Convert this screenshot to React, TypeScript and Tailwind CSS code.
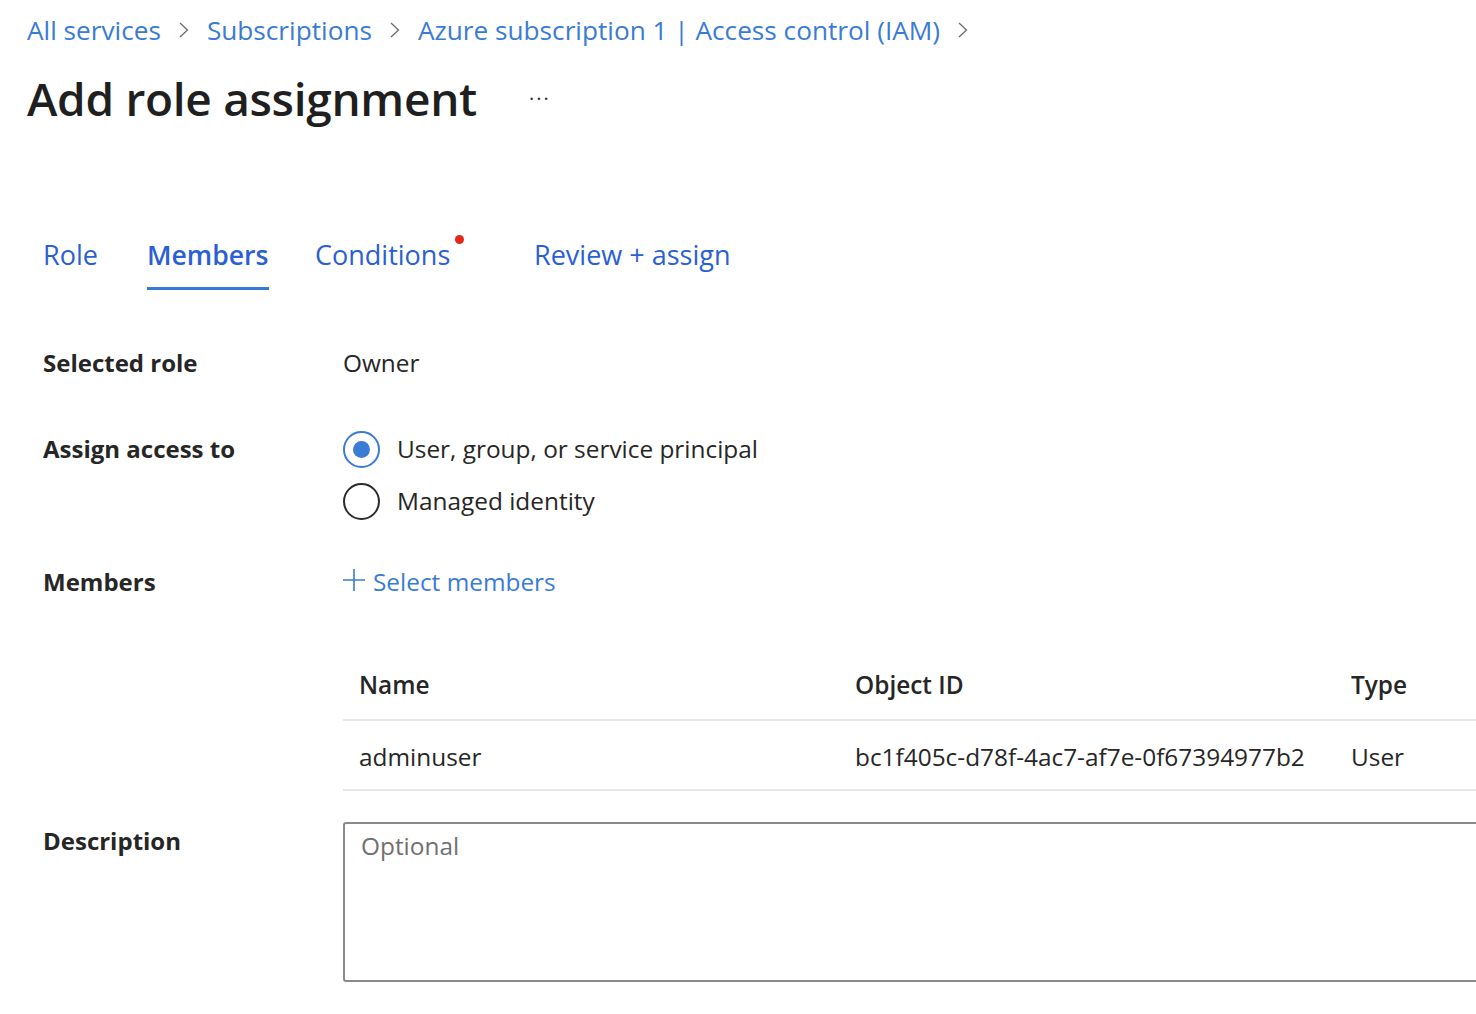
const crumbs = ["All services", "Subscriptions", "Azure subscription 1 | Access control (IAM)"];

const tabs = [
  { name: "Role", active: false, dot: false, w: "w-[104px]" },
  { name: "Members", active: true, dot: false, w: "w-[168px]" },
  { name: "Conditions", active: false, dot: true, w: "w-[219px]" },
  { name: "Review + assign", active: false, dot: false, w: "" },
];

function Chevron() {
  return (
    <svg width="14" height="22" viewBox="0 0 14 22" className="mx-[16px] shrink-0">
      <path d="M3 4l7.5 7L3 18" fill="none" stroke="#6b6b6b" strokeWidth="1.3" />
    </svg>
  );
}

function Radio({ checked, label }: { checked: boolean; label: string }) {
  return (
    <div className="flex h-[52px] items-center">
      <span
        className={
          checked
            ? "flex h-[37px] w-[37px] items-center justify-center rounded-full border-[2px] border-[#3a7bd5]"
            : "flex h-[37px] w-[37px] items-center justify-center rounded-full border-[2px] border-[#2b2b2b]"
        }
      >
        {checked && <span className="h-[17px] w-[17px] rounded-full bg-[#3a7bd5]" />}
      </span>
      <span className="ml-[17px] text-[24.4px] leading-[32px] text-[#262626]">{label}</span>
    </div>
  );
}

export default function App() {
  return (
    <div className="min-h-screen w-full overflow-hidden bg-white font-['Open_Sans',sans-serif] text-[#262626]">
      <div className="pl-[27px] pt-[12px]">
        <nav className="flex h-[36px] items-center text-[26.2px] leading-[36px] text-[#3a7bd5]">
          {crumbs.map((c) => (
            <span key={c} className="flex items-center">
              <span className="whitespace-nowrap">{c}</span>
              <Chevron />
            </span>
          ))}
        </nav>
        <div className="mt-[27px] flex items-center">
          <h1 className="text-[46px] leading-[46px] font-semibold tracking-[-0.3px] text-[#1f1f1f]">
            Add role assignment
          </h1>
          <span className="ml-[52px] mt-[2px] text-[20px] leading-none tracking-[2px] text-[#333]">···</span>
        </div>
      </div>

      <div className="pl-[43px]">
        <div className="mt-[116px] flex">
          {tabs.map((t) => (
            <div key={t.name} className={`relative flex ${t.w}`}>
              <div className="flex flex-col">
                <span
                  className={
                    t.active
                      ? "text-[26.6px] leading-[36px] font-semibold text-[#2a5fd6]"
                      : "text-[27px] leading-[36px] text-[#2a5fd6]"
                  }
                >
                  {t.name}
                </span>
                <span
                  className={
                    t.active ? "mt-[14px] h-[3px] w-full bg-[#3779d6]" : "mt-[14px] h-[3px] w-full bg-transparent"
                  }
                />
              </div>
              {t.dot && <span className="absolute left-[140px] top-[-2px] h-[9px] w-[9px] rounded-full bg-[#e3281b]" />}
            </div>
          ))}
        </div>

        <div className="mt-[57px] grid grid-cols-[300px_1fr]">
          <div className="text-[24px] leading-[32px] font-bold text-[#262626]">Selected role</div>
          <div className="text-[24.4px] leading-[32px]">Owner</div>

          <div className="mt-[54px] text-[24px] leading-[32px] font-bold">Assign access to</div>
          <div className="mt-[44px]">
            <Radio checked label="User, group, or service principal" />
            <Radio checked={false} label="Managed identity" />
          </div>

          <div className="mt-[39px] text-[24px] leading-[32px] font-bold">Members</div>
          <div className="mt-[39px] flex items-center text-[24.4px] leading-[32px] text-[#3a7bd5]">
            <svg width="22" height="22" viewBox="0 0 22 22" className="mr-[8px] -mt-[5px] shrink-0">
              <path d="M11 0v22M0 11h22" stroke="#3a7bd5" strokeWidth="1.6" />
            </svg>
            Select members
          </div>

          <div />
          <div className="mt-[53px] -mr-[40px]">
            <div className="grid h-[70px] grid-cols-[496px_496px_1fr] items-center border-b-[2px] border-[#e8e8e8] pl-[16px] text-[24.4px] font-semibold">
              <span>Name</span>
              <span>Object ID</span>
              <span>Type</span>
            </div>
            <div className="grid h-[70px] grid-cols-[496px_496px_1fr] items-center border-b-[2px] border-[#e8e8e8] pl-[16px] pt-[4px] text-[24.4px]">
              <span>adminuser</span>
              <span className="whitespace-nowrap">bc1f405c-d78f-4ac7-af7e-0f67394977b2</span>
              <span>User</span>
            </div>
          </div>

          <div className="mt-[34px] text-[24px] leading-[32px] font-bold">Description</div>
          <div className="mt-[31px] -mr-[40px]">
            <textarea
              placeholder="Optional"
              className="block h-[160px] w-full resize-none rounded-[3px] border-[2px] border-[#8a8a8a] px-[16px] py-[6px] text-[24.4px] leading-[32px] placeholder:text-[#707070]"
            />
          </div>
        </div>
      </div>
    </div>
  );
}
